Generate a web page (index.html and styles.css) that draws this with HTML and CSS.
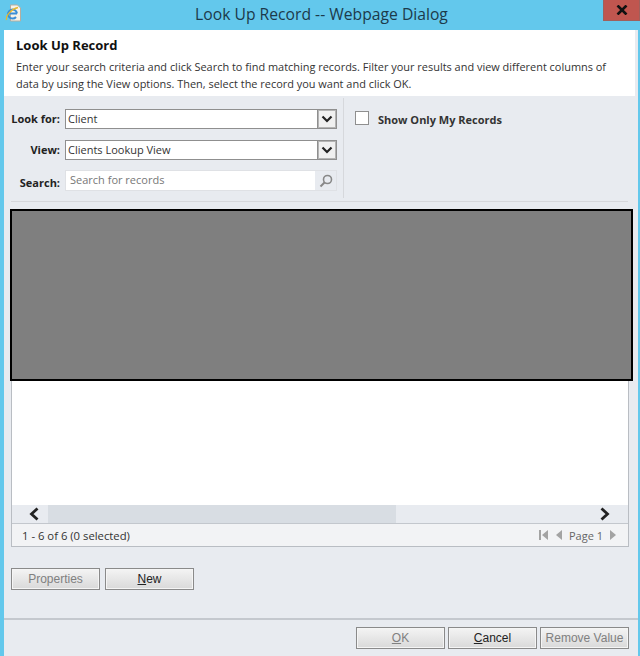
FILE: index.html
```html
<!DOCTYPE html>
<html lang="en">
<head>
    <meta charset="UTF-8">
    <meta name="viewport" content="width=device-width, initial-scale=1.0">
    <title>Look Up Record -- Webpage Dialog</title>
    <link rel="stylesheet" href="styles.css">
</head>
<body>
<div class="window">

    <!-- Title bar -->
    <div class="titlebar">
        <svg class="ie-icon" width="17" height="18" viewBox="0 0 17 18">
            <path d="M5.500 1h7l3 3v13h-10z" fill="#f6f3e8" stroke="#b5ada0"/>
            <path d="M12 9.500H3.500M12 9.500A4.500 4.500 0 1 0 11 13" fill="none" stroke="#3a8fd6" stroke-width="2"/>
            <path d="M1.500 16C0.500 12 6 5 13 3.500" fill="none" stroke="#e8b92e" stroke-width="1.300"/>
        </svg>
        <span class="title-text">Look Up Record -- Webpage Dialog</span>
        <div class="close-btn">
            <svg width="12" height="10" viewBox="0 0 12 10">
                <path d="M1.500 0.500L10.500 9.500M10.500 0.500L1.500 9.500" stroke="#111" stroke-width="2.600"/>
            </svg>
        </div>
    </div>

    <div class="dialog">
        <!-- Description -->
        <div class="intro">
            <h1>Look Up Record</h1>
            <p>Enter your search criteria and click Search to find matching records. Filter your results and view different columns of data by using the View options. Then, select the record you want and click OK.</p>
        </div>

        <!-- Search options -->
        <div class="filters">
            <div class="filter-left">
                <div class="filter-row">
                    <label>Look for:</label>
                    <div class="select">
                        <span class="select-text">Client</span>
                        <span class="select-arrow">
                            <svg width="12" height="8" viewBox="0 0 12 8"><path d="M1.500 1.500L6 6l4.500-4.500" fill="none" stroke="#222" stroke-width="2.200"/></svg>
                        </span>
                    </div>
                </div>
                <div class="filter-row">
                    <label>View:</label>
                    <div class="select">
                        <span class="select-text">Clients Lookup View</span>
                        <span class="select-arrow">
                            <svg width="12" height="8" viewBox="0 0 12 8"><path d="M1.500 1.500L6 6l4.500-4.500" fill="none" stroke="#222" stroke-width="2.200"/></svg>
                        </span>
                    </div>
                </div>
                <div class="filter-row">
                    <label class="search-label">Search:</label>
                    <div class="search">
                        <span class="search-text">Search for records</span>
                        <span class="search-btn">
                            <svg width="14" height="14" viewBox="0 0 14 14"><circle cx="8.500" cy="5.500" r="4" fill="none" stroke="#888" stroke-width="1.600"/><path d="M5.500 8.500L1.500 12.500" stroke="#888" stroke-width="2"/></svg>
                        </span>
                    </div>
                </div>
            </div>
            <div class="filter-right">
                <span class="checkbox"></span>
                <span class="check-label">Show Only My Records</span>
            </div>
        </div>

        <!-- Results grid -->
        <div class="grid">
            <div class="redacted"></div>
            <div class="grid-empty"></div>
            <div class="scrollbar">
                <span class="scroll-arrow scroll-left">
                    <svg width="12" height="14" viewBox="0 0 12 14"><path d="M9.500 1.500L3.500 7l6 5.500" fill="none" stroke="#222" stroke-width="2.800"/></svg>
                </span>
                <span class="scroll-thumb"></span>
                <span class="scroll-arrow scroll-right">
                    <svg width="12" height="14" viewBox="0 0 12 14"><path d="M2.500 1.500L8.500 7l-6 5.500" fill="none" stroke="#222" stroke-width="2.800"/></svg>
                </span>
            </div>
            <div class="status">
                <span class="status-text">1 - 6 of 6 (0 selected)</span>
                <div class="pager">
                    <svg width="9" height="10" viewBox="0 0 9 10"><path d="M0 0h2v10H0zM9 0v10L3 5z" fill="#a3a3a3"/></svg>
                    <svg class="pager-prev" width="6" height="10" viewBox="0 0 6 10"><path d="M6 0v10L0 5z" fill="#a3a3a3"/></svg>
                    <span class="page-no">Page 1</span>
                    <svg width="6" height="10" viewBox="0 0 6 10"><path d="M0 0v10l6-5z" fill="#a3a3a3"/></svg>
                </div>
            </div>
        </div>

        <div class="grid-actions">
            <button class="btn" disabled>Properties</button>
            <button class="btn"><u>N</u>ew</button>
        </div>

        <!-- Footer buttons -->
        <div class="footer">
            <button class="btn" disabled><u>O</u>K</button>
            <button class="btn"><u>C</u>ancel</button>
            <button class="btn" disabled>Remove Value</button>
        </div>
    </div>
</div>
</body>
</html>
```

FILE: styles.css
```css
html, body {
    margin: 0;
    height: 100%;
}

body {
    font-family: 'Open Sans', 'Noto Sans', sans-serif;
    font-size: 11px;
    color: #222;
    overflow: hidden;
}

.window {
    width: 640px;
    height: 656px;
    background-color: #63c8ec;
    display: flex;
    flex-direction: column;
    padding: 0 2px 0 4px;
    box-sizing: border-box;
}

.titlebar {
    height: 30px;
    flex: none;
    display: flex;
    align-items: center;
    justify-content: center;
    position: relative;
    margin: 0 -2px 0 -4px;
    padding-bottom: 2px;
    box-sizing: border-box;
}

.title-text {
    font-size: 15.7px;
    color: #1c3a4a;
    margin-left: 3px;
}

.ie-icon {
    position: absolute;
    left: 5px;
    top: 4px;
}

.close-btn {
    position: absolute;
    right: 0;
    top: 0;
    width: 37px;
    height: 21px;
    background-color: #c0564f;
    border: 1px solid #a0605c;
    border-top: 0;
    box-sizing: border-box;
    display: flex;
    align-items: center;
    justify-content: center;
}

.dialog {
    flex: 1;
    display: flex;
    flex-direction: column;
    background-color: #e8ebf0;
}

.intro {
    height: 66px;
    flex: none;
    background-color: #fff;
    padding: 7px 12px 0;
    margin-right: 3px;
    box-sizing: border-box;
}

.intro h1 {
    margin: 0 0 5px;
    font-size: 13px;
    line-height: 16px;
    font-weight: 700;
    color: #111;
}

.intro p {
    margin: 0;
    font-size: 10.95px;
    line-height: 17px;
    color: #333;
}

.filters {
    display: flex;
    height: 106px;
    flex: none;
    margin: 0 10px 0 7px;
    border-bottom: 1px solid #d6d8dc;
    box-sizing: border-box;
    padding-top: 2px;
}

.filter-left {
    width: 333px;
    height: 100px;
    box-sizing: border-box;
    padding: 11px 6px 0 0;
    border-right: 1px solid #d6d8dc;
    display: flex;
    flex-direction: column;
    gap: 11px;
}

.filter-row {
    display: flex;
    align-items: center;
    height: 20px;
}

.filter-row label {
    width: 49px;
    margin: 0 5px 2px 0;
    text-align: right;
    font-weight: 700;
    color: #222;
    flex: none;
}

.filter-row .search-label {
    margin: 3px 5px 0 0;
}

.select {
    flex: 1;
    height: 20px;
    background: #fff;
    border: 1px solid #8f8f8f;
    box-sizing: border-box;
    display: flex;
    align-items: center;
    justify-content: space-between;
    padding-left: 2px;
    color: #333;
}

.select-text {
    padding-bottom: 2px;
}

.select-arrow {
    width: 20px;
    height: 20px;
    margin-right: -1px;
    box-sizing: border-box;
    background: #f0f0f0;
    border: 1px solid #8f8f8f;
    box-shadow: inset 0 0 0 1px #b4b4b4;
    display: flex;
    align-items: center;
    justify-content: center;
}

.search {
    flex: 1;
    height: 21px;
    margin-top: -1px;
    background: #fff;
    border: 1px solid #dfe1e5;
    box-sizing: border-box;
    display: flex;
    align-items: center;
    justify-content: space-between;
    padding-left: 4px;
}

.search-text {
    color: #777;
    padding-bottom: 2px;
}

.search-btn {
    width: 21px;
    height: 19px;
    background: #e8ebf0;
    display: flex;
    align-items: center;
    justify-content: center;
}

.filter-right {
    display: flex;
    align-items: flex-start;
    padding: 13px 0 0 11px;
}

.checkbox {
    width: 12px;
    height: 12px;
    background: #fff;
    border: 1px solid #8f8f8f;
    flex: none;
}

.check-label {
    margin: 1px 0 0 9px;
    font-weight: 700;
    color: #333;
}

.grid {
    margin: 7px 9px 0 7px;
    height: 338px;
    flex: none;
    display: flex;
    flex-direction: column;
    background: #fff;
    border: 1px solid #b9bdc3;
    border-top: 0;
    box-sizing: border-box;
}

.redacted {
    height: 172px;
    flex: none;
    margin-left: -2px;
    margin-right: -5px;
    background: #7f7f7f;
    border: 2px solid #000;
    box-sizing: border-box;
}

.grid-empty {
    flex: 1;
}

.scrollbar {
    height: 18px;
    flex: none;
    background: #e8ebf0;
    border-bottom: 1px solid #c3c7cd;
    display: flex;
    align-items: center;
}

.scroll-arrow {
    display: flex;
    align-items: center;
    justify-content: center;
    flex: none;
    box-sizing: border-box;
}

.scroll-left {
    width: 36px;
    padding-left: 8px;
}

.scroll-right {
    width: 46px;
}

.scroll-thumb {
    width: 348px;
    height: 100%;
    background: #d8dde3;
    margin-right: auto;
}

.status {
    height: 22px;
    flex: none;
    background: #f2f3f5;
    display: flex;
    align-items: center;
    justify-content: space-between;
    padding: 0 12px 0 10px;
    color: #333;
}

.status-text {
    font-size: 11.3px;
}

.pager {
    display: flex;
    align-items: center;
    color: #666;
}

.pager-prev {
    margin-left: 8px;
}

.page-no {
    width: 33px;
    margin: 0 8px 0 7px;
    font-size: 11px;
    white-space: nowrap;
}

.btn {
    font-family: 'Liberation Sans', sans-serif;
    font-size: 12px;
    width: 89px;
    height: 22px;
    padding: 0;
    color: #222;
    background: linear-gradient(#f4f4f4, #d9d9d9);
    border: 1px solid #8a8a8a;
    box-shadow: inset 0 0 0 1px #f5f5f5;
}

.btn:disabled {
    color: #808080;
}

.grid-actions {
    display: flex;
    gap: 5px;
    margin: 21px 0 0 7px;
    height: 22px;
    flex: none;
}

.footer {
    margin-top: 28px;
    flex: 1;
    border-top: 2px solid #c4c8ce;
    display: flex;
    justify-content: flex-end;
    gap: 3px;
    padding: 7px 9px 0 0;
}
```
